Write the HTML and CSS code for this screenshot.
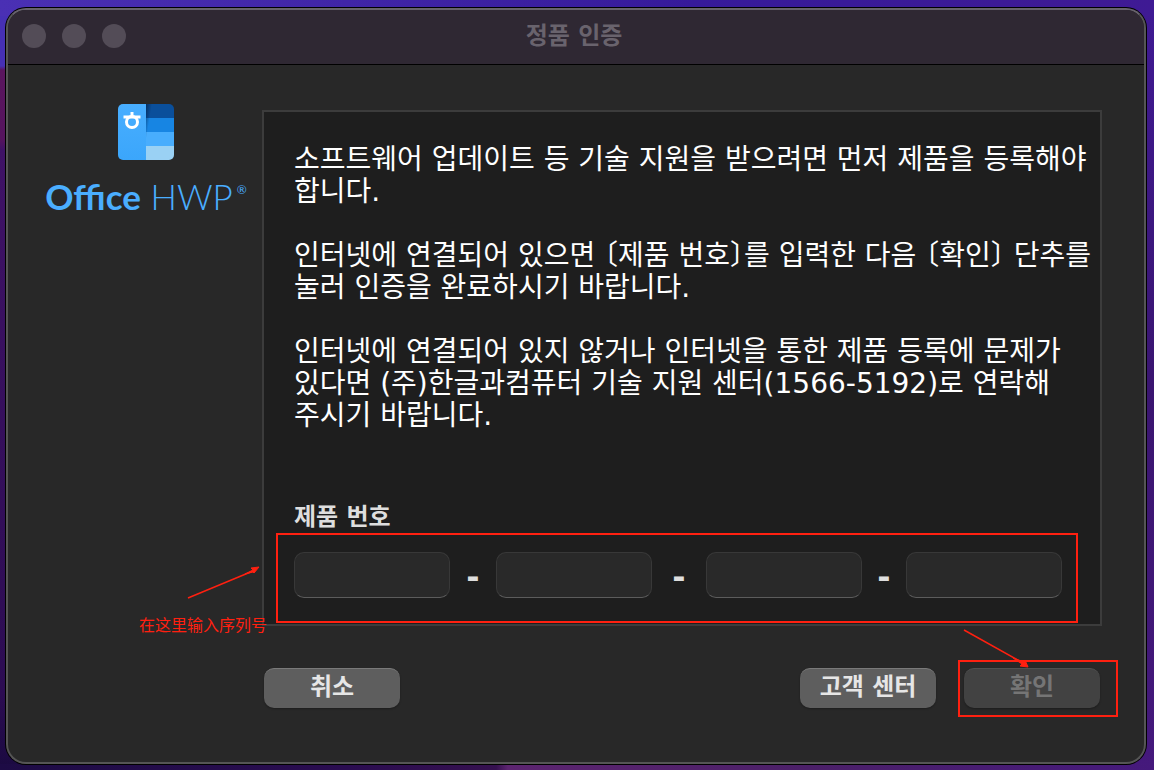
FILE: index.html
```html
<!DOCTYPE html>
<html lang="ko">
<head>
    <meta charset="UTF-8">
    <meta name="viewport" content="width=device-width, initial-scale=1.0">
    <title>정품 인증</title>
    <link rel="stylesheet" href="styles.css">
</head>
<body>
    <div class="window">
        <header class="titlebar">
            <div class="lights">
                <span class="light"></span>
                <span class="light"></span>
                <span class="light"></span>
            </div>
            <h1 class="title">정품 인증</h1>
        </header>

        <main class="content">
            <div class="brand">
                <svg class="logo" width="56" height="56" viewBox="0 0 56 56" aria-hidden="true">
                    <defs>
                        <clipPath id="logoShape"><rect width="56" height="56" rx="5"/></clipPath>
                        <linearGradient id="fold" gradientUnits="userSpaceOnUse" x1="28" y1="0" x2="34" y2="1">
                            <stop offset="0" stop-color="#001a3a" stop-opacity="0.6"/>
                            <stop offset="1" stop-color="#001a3a" stop-opacity="0"/>
                        </linearGradient>
                        <linearGradient id="cover" x1="0" y1="0" x2="0" y2="1">
                            <stop offset="0" stop-color="#48aeff"/>
                            <stop offset="1" stop-color="#3ba6fb"/>
                        </linearGradient>
                    </defs>
                    <g clip-path="url(#logoShape)">
                        <rect x="28" width="28" height="14" fill="#0a4f9b"/>
                        <rect x="28" y="14" width="28" height="14" fill="#1785e3"/>
                        <rect x="28" y="28" width="28" height="14" fill="#48adfd"/>
                        <rect x="28" y="42" width="28" height="14" fill="#9ad1f4"/>
                        <path d="M28 0h7L30 56h-2z" fill="url(#fold)"/>
                        <rect width="28" height="56" fill="url(#cover)"/>
                        <path d="M14 8v5M5.500 13h17" stroke="#fff" stroke-width="3" fill="none"/>
                        <circle cx="14" cy="18" r="5.500" stroke="#fff" stroke-width="3" fill="none"/>
                    </g>
                </svg>
                <p class="brand-name"><strong>Office</strong> HWP<sup>®</sup></p>
            </div>

            <div class="main">
                <form class="panel" id="serialForm">
                    <p>소프트웨어 업데이트 등 기술 지원을 받으려면 먼저 제품을 등록해야<br>합니다.</p>
                    <p>인터넷에 연결되어 있으면 〔제품 번호〕를 입력한 다음 〔확인〕 단추를<br>눌러 인증을 완료하시기 바랍니다.</p>
                    <p>인터넷에 연결되어 있지 않거나 인터넷을 통한 제품 등록에 문제가<br>있다면 (주)한글과컴퓨터 기술 지원 센터(1566-5192)로 연락해<br>주시기 바랍니다.</p>

                    <label class="serial-label" for="serial1">제품 번호</label>
                    <div class="serial">
                        <input type="text" id="serial1" aria-label="제품 번호 1">
                        <span class="dash">-</span>
                        <input type="text" id="serial2" aria-label="제품 번호 2">
                        <span class="dash">-</span>
                        <input type="text" id="serial3" aria-label="제품 번호 3">
                        <span class="dash">-</span>
                        <input type="text" id="serial4" aria-label="제품 번호 4">

                        <div class="mark mark-serial"></div>
                        <svg class="arrow arrow-serial" width="74" height="34" viewBox="0 0 74 34" aria-hidden="true">
                            <path d="M1 32L66 5" stroke-width="1.500"/>
                            <path d="M72 1L64 2L66 4L58 8L66 6L67 7z"/>
                        </svg>
                        <span class="note" lang="zh">在这里输入序列号</span>
                    </div>
                </form>

                <div class="buttons">
                    <button type="button">취소</button>
                    <button type="button" class="support">고객 센터</button>
                    <div class="confirm">
                        <button type="submit" form="serialForm" disabled>확인</button>
                        <div class="mark mark-confirm"></div>
                        <svg class="arrow arrow-confirm" width="68" height="40" viewBox="0 0 68 40" aria-hidden="true">
                            <path d="M1 1L60 34" stroke-width="1.500"/>
                            <path d="M65 38L57 37L59 35L50 29L61 33L62 31z"/>
                        </svg>
                    </div>
                </div>
            </div>
        </main>
    </div>
</body>
</html>
```

FILE: styles.css
```css
* {
    box-sizing: border-box;
}
body {
    margin: 0;
    min-height: 100vh;
    padding: 8px 8px 6px 6px;
    display: flex;
    font-family: "DejaVu Sans", "Noto Sans CJK KR", sans-serif;
    color: #fff;
    background:
        linear-gradient(90deg, #1d0b45 0, #2a0c50 30%, #35104f 43%, #5c2470 44%, #4b1f68 70%, #45197c 100%) bottom / 100% 6px no-repeat,
        linear-gradient(90deg, #4a30b4, #361a9a 60%, #3f1a94) top / 100% 16px no-repeat,
        linear-gradient(180deg, #4630b4 66px, #5a155e 70px, #55145e 140px, #3f1266 150px, #2c0c52 90%, #1a0a40) left / 20px 100% no-repeat,
        linear-gradient(180deg, #3f1a94, #3a1570 50%, #45197c);
}
.window {
    flex: 1;
    display: flex;
    flex-direction: column;
    border: 2px solid #555;
    border-top-color: #67626c;
    border-radius: 20px;
    box-shadow: 0 0 0 1px #000;
    background-color: #282828;
    overflow: hidden;
}
.titlebar {
    position: relative;
    height: 55px;
    padding: 0 18px 2px 14px;
    display: flex;
    align-items: center;
    justify-content: center;
    background-color: #2f2833;
    border-bottom: 1px solid #000;
}
.lights {
    position: absolute;
    left: 14px;
    display: flex;
    gap: 16px;
}
.light {
    width: 24px;
    height: 24px;
    border-radius: 50%;
    background-color: #534c57;
}
.title {
    margin: 0;
    font-size: 24px;
    line-height: 32px;
    font-weight: bold;
    color: #69636d;
}
.content {
    display: grid;
    grid-template-columns: 254px minmax(0, 1fr);
    padding: 39px 42px 54px 0;
}
.brand {
    padding-left: 22px;
    display: flex;
    flex-direction: column;
    align-items: center;
}
.brand-name {
    margin: 16px 0 0;
    font-family: Lato, sans-serif;
    font-size: 35px;
    font-weight: 300;
    line-height: 40px;
    color: #4aaeff;
    white-space: nowrap;
}
.brand-name strong {
    font-weight: bold;
}
.brand-name sup {
    margin-left: 4px;
    font-size: 12px;
    font-weight: normal;
    line-height: 12px;
    vertical-align: 16px;
}
.main {
    margin-top: 6px;
}
.panel {
    padding: 32px 10px 26px 30px;
    border: 2px solid #3c3c3c;
    background-color: #1e1e1e;
}
.panel p {
    margin: 0 0 32px;
    font-size: 28px;
    line-height: 32px;
    white-space: nowrap;
    font-feature-settings: "halt";
}
.serial-label {
    display: block;
    margin-top: 70px;
    font-size: 24px;
    font-weight: bold;
    line-height: 30px;
    color: #dedede;
}
.serial {
    position: relative;
    margin: 20px 28px 0 0;
    display: grid;
    grid-template-columns: 1fr 46px 1fr 54px 1fr 44px 1fr;
    align-items: center;
}
.serial input {
    width: 100%;
    height: 46px;
    padding: 0 12px;
    border: 1px solid #383838;
    border-bottom-color: #5c5c5c;
    border-radius: 10px;
    background-color: #292929;
    color: #fff;
    font: inherit;
    font-size: 24px;
}
.dash {
    padding-top: 4px;
    text-align: center;
    font-size: 32px;
    font-weight: bold;
    line-height: 40px;
    color: #dedede;
}
.buttons {
    margin-top: 42px;
    padding: 0 2px;
    display: flex;
    gap: 28px;
}
.support {
    margin-left: auto;
}
.confirm {
    position: relative;
}
button {
    display: block;
    width: 136px;
    height: 40px;
    padding: 0 0 4px;
    border: none;
    border-top: 1px solid #7a7a7a;
    border-radius: 10px;
    background-color: #5e5e5e;
    box-shadow: 0 1px 2px rgba(0, 0, 0, 0.3);
    color: #e6e6e6;
    font-family: inherit;
    font-size: 24px;
    font-weight: bold;
    line-height: 32px;
}
button:disabled {
    border-top-color: #505050;
    background-color: #424242;
    color: #757575;
}

/* red guide marks over the dialog */
.mark {
    position: absolute;
    border: 2px solid #ff2010;
    pointer-events: none;
}
.mark-serial {
    inset: -19px -16px -25px -18px;
}
.mark-confirm {
    inset: -8px -18px -9px -6px;
}
.arrow {
    position: absolute;
    fill: #ff2010;
    stroke: #ff2010;
    pointer-events: none;
}
.arrow-serial {
    left: -107px;
    top: 14px;
}
.arrow-confirm {
    left: -1px;
    top: -39px;
}
.note {
    position: absolute;
    left: -155px;
    top: 60px;
    font-family: "Noto Sans CJK SC", sans-serif;
    font-size: 16px;
    line-height: 24px;
    color: #ff2010;
    white-space: nowrap;
}
```
